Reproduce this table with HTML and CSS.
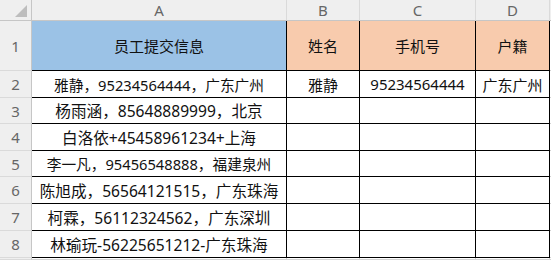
FILE: index.html
```html
<!DOCTYPE html>
<html lang="zh-CN">
<head>
<meta charset="utf-8">
<title>员工提交信息</title>
<link rel="stylesheet" href="styles.css">
</head>
<body>
<div class="sheet">
  <div class="hd corner"><span class="tri"></span></div>
  <div class="hd colhd">A</div>
  <div class="hd colhd">B</div>
  <div class="hd colhd">C</div>
  <div class="hd colhd">D</div>
  <div class="hd colhd rest"></div>

  <div class="hd rowhd">1</div>
  <div class="cell data blue">员工提交信息</div>
  <div class="cell data peach">姓名</div>
  <div class="cell data peach">手机号</div>
  <div class="cell data peach">户籍</div>
  <div class="cell rest"></div>

  <div class="hd rowhd">2</div>
  <div class="cell data s15">雅静，95234564444，广东广州</div>
  <div class="cell data">雅静</div>
  <div class="cell data">95234564444</div>
  <div class="cell data">广东广州</div>
  <div class="cell rest"></div>

  <div class="hd rowhd">3</div>
  <div class="cell data s16">杨雨涵，85648889999，北京</div>
  <div class="cell data"></div>
  <div class="cell data"></div>
  <div class="cell data"></div>
  <div class="cell rest"></div>

  <div class="hd rowhd">4</div>
  <div class="cell data s16">白洛依+45458961234+上海</div>
  <div class="cell data"></div>
  <div class="cell data"></div>
  <div class="cell data"></div>
  <div class="cell rest"></div>

  <div class="hd rowhd">5</div>
  <div class="cell data s15">李一凡，95456548888，福建泉州</div>
  <div class="cell data"></div>
  <div class="cell data"></div>
  <div class="cell data"></div>
  <div class="cell rest"></div>

  <div class="hd rowhd">6</div>
  <div class="cell data s16">陈旭成，56564121515，广东珠海</div>
  <div class="cell data"></div>
  <div class="cell data"></div>
  <div class="cell data"></div>
  <div class="cell rest"></div>

  <div class="hd rowhd">7</div>
  <div class="cell data s16">柯霖，56112324562，广东深圳</div>
  <div class="cell data"></div>
  <div class="cell data"></div>
  <div class="cell data"></div>
  <div class="cell rest"></div>

  <div class="hd rowhd">8</div>
  <div class="cell data s16">林瑜玩-56225651212-广东珠海</div>
  <div class="cell data"></div>
  <div class="cell data"></div>
  <div class="cell data"></div>
  <div class="cell rest"></div>

  <div class="hd rowhd"></div>
  <div class="cell"></div>
  <div class="cell"></div>
  <div class="cell"></div>
  <div class="cell"></div>
  <div class="cell rest"></div>
</div>
</body>
</html>
```

FILE: styles.css
```css
html, body {
  margin: 0;
  padding: 0;
  background: #ffffff;
}

.sheet {
  width: 551px;
  height: 260px;
  overflow: hidden;
  display: grid;
  grid-template-columns: 32px 255px 73px 116px 74px 1fr;
  grid-template-rows: 21px 50px 27px 26px 27px 26px 27px 27px 27px 1fr;
  font-family: "Noto Sans", "Noto Sans CJK SC", sans-serif;
  font-size: 15px;
  color: #000;
}

.sheet > div {
  box-sizing: border-box;
  border-right: 1px solid #d4d4d4;
  border-bottom: 1px solid #d4d4d4;
  display: flex;
  align-items: center;
  justify-content: center;
  white-space: nowrap;
  min-width: 0;
}

.hd {
  background: #efefef;
  color: #666666;
  font-size: 15px;
}

.hd.colhd {
  border-right-color: #dadada;
  border-bottom-color: #c6c6c6;
}

.hd.rowhd {
  border-right-color: #c6c6c6;
  border-bottom-color: #dadada;
}

.corner {
  position: relative;
  border-bottom-color: #c6c6c6 !important;
  border-right-color: #c6c6c6 !important;
}

.tri {
  position: absolute;
  left: 15px;
  top: 5px;
  width: 12px;
  height: 12px;
  background: #bdbdbd;
  clip-path: polygon(100% 0, 100% 100%, 0 100%);
}

.sheet > .data {
  border-right-color: #000;
  border-bottom-color: #000;
  color: #111;
}

.blue {
  background: #9bc2e6;
}

.peach {
  background: #f8cbad;
}

.s15 {
  font-size: 14.7px;
}

.s16 {
  font-size: 15.6px;
}

.sheet > .rest {
  border-right: none;
}
```
